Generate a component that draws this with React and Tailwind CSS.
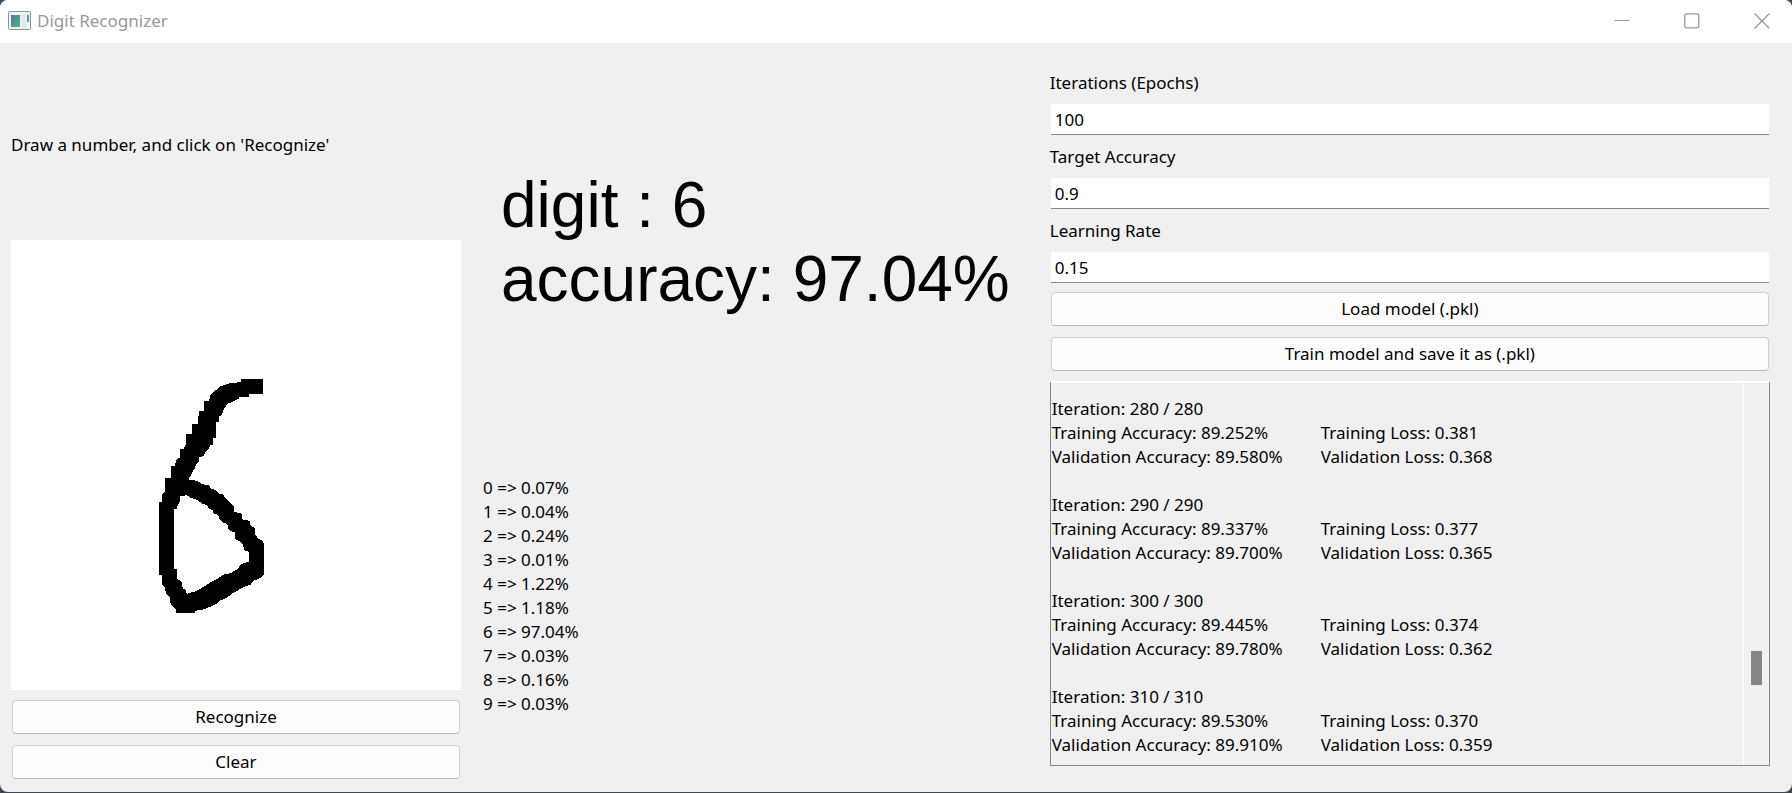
import React from "react";

const probabilities = ["0.07", "0.04", "0.24", "0.01", "1.22", "1.18", "97.04", "0.03", "0.16", "0.03"];

const logEntries = [
  { iteration: 280, trainAcc: "89.252", trainLoss: "0.381", valAcc: "89.580", valLoss: "0.368" },
  { iteration: 290, trainAcc: "89.337", trainLoss: "0.377", valAcc: "89.700", valLoss: "0.365" },
  { iteration: 300, trainAcc: "89.445", trainLoss: "0.374", valAcc: "89.780", valLoss: "0.362" },
  { iteration: 310, trainAcc: "89.530", trainLoss: "0.370", valAcc: "89.910", valLoss: "0.359" },
];

function PushButton({ children }) {
  return (
    <button
      type="button"
      className="mx-px h-[34px] shrink-0 rounded-[4px] border border-[#cfcfcf] border-b-[#b8b8b8] bg-[#fdfdfd] leading-6"
    >
      {children}
    </button>
  );
}

function Field({ id, label, value }) {
  return (
    <div className="flex flex-col gap-[9px]">
      <label htmlFor={id} className="leading-6">
        {label}
      </label>
      <input
        id={id}
        type="text"
        defaultValue={value}
        className="mx-px h-[31px] rounded-none border-b border-[#868686] bg-white px-1 leading-6 outline-none"
      />
    </div>
  );
}

function AppIcon() {
  return (
    <svg width="24" height="20" viewBox="0 0 24 20" aria-hidden="true">
      <defs>
        <linearGradient id="pane" x1="0" y1="0" x2="1" y2="1">
          <stop offset="0" stopColor="#4b7f9c" />
          <stop offset="1" stopColor="#55b088" />
        </linearGradient>
      </defs>
      <rect x="0.5" y="0.5" width="22" height="18" rx="1" fill="#f1f3f5" stroke="#8a929a" />
      <rect x="3" y="4" width="9" height="12" fill="url(#pane)" />
      <rect x="13" y="3" width="5" height="14" fill="#e4e9ec" />
      <rect x="19" y="4" width="2" height="7" fill="#5b9a95" />
    </svg>
  );
}

function TitleBar() {
  return (
    <header className="flex h-[43px] shrink-0 items-center bg-white pb-[2px] pl-2 text-[#999]">
      <AppIcon />
      <h1 className="ml-[5px] flex-1 leading-6">Digit Recognizer</h1>
      <div className="flex h-full gap-[10px]">
        <button type="button" aria-label="Minimize" className="flex w-[60px] items-center justify-center">
          <svg width="16" height="16" viewBox="0 0 16 16" fill="none" stroke="#999">
            <path d="M0.5 7.5H15.5" />
          </svg>
        </button>
        <button type="button" aria-label="Maximize" className="flex w-[60px] items-center justify-center">
          <svg width="16" height="16" viewBox="0 0 16 16" fill="none" stroke="#999" strokeWidth="1.3">
            <rect x="0.8" y="0.8" width="14" height="14" rx="1.5" />
          </svg>
        </button>
        <button type="button" aria-label="Close" className="flex w-[60px] items-center justify-center">
          <svg width="16" height="16" viewBox="0 0 16 16" fill="none" stroke="#999" strokeWidth="1.3">
            <path d="M0.5 0.5L15.5 15.5M15.5 0.5L0.5 15.5" />
          </svg>
        </button>
      </div>
    </header>
  );
}

function DrawingCanvas() {
  return (
    <svg viewBox="0 0 1350 1350" className="mb-[10px] aspect-square w-full shrink-0 bg-white" role="img" aria-label="Drawn digit">
      <g transform="translate(387 360)" shapeRendering="crispEdges">
        <path
          fillRule="evenodd"
          fill="#000"
          d="M368 57V102H327V110H298V116L280 124L262 132L256 142L250 150L246 165L238 168V187H228V235H219V254H210L208 264L196 276L192 288L178 292L176 305L168 312L164 325L156 338L150 350H146V360L172 362L184 372L208 376L210 384L226 390L236 400L250 404L254 412L262 420L270 428L282 440V456L304 460L308 480L330 482L332 498L344 504V520L354 536L366 542L372 552V644L366 650L350 660L340 662L332 674L312 680L296 690L278 700L262 712L240 722L226 734L206 742L186 750L165 752V759H108V748L97 738L90 728V712L78 702L74 680L66 674V645H57V426H66V405L75 395V354H93V318H103L110 298L120 292V268H129L138 254V223H156V192H174V178L178 152H192V122H208L210 108L220 98L228 90L240 80L250 76L268 70L304 66V57ZM120 408L140 406L154 414L172 420L186 430L200 436L208 446L218 450L220 460L234 464L238 478L246 486L262 492L264 506L274 514L286 518V538L300 544L308 554L314 572L328 576V604L304 612L292 628L270 640L250 644L232 656L210 668L188 682L168 694L150 698L140 702L138 690L128 684L126 666L110 656V626H102V448H110L112 438L120 424Z"
        />
      </g>
    </svg>
  );
}

function TrainingLog() {
  return (
    <section
      aria-label="Training log"
      className="mt-[10px] flex flex-1 border border-t-2 border-[#868686] border-t-white"
    >
      <div className="flex flex-1 flex-col gap-6 pt-[14px] pb-2 leading-6">
        {logEntries.map((e) => (
          <div key={e.iteration} className="grid grid-cols-[269px_auto] pl-px">
            <p className="col-span-2">
              Iteration: {e.iteration} / {e.iteration}
            </p>
            <p>Training Accuracy: {e.trainAcc}%</p>
            <p>Training Loss: {e.trainLoss}</p>
            <p>Validation Accuracy: {e.valAcc}%</p>
            <p>Validation Loss: {e.valLoss}</p>
          </div>
        ))}
      </div>
      <div className="flex w-[26px] flex-col items-center border-l border-white">
        <div className="grow-[10]" />
        <div className="h-[34px] w-[11px] bg-[#868686]" />
        <div className="grow-[3]" />
      </div>
    </section>
  );
}

export default function App() {
  return (
    <div className="flex min-h-screen flex-col bg-[#3a4856] pb-px font-['Noto_Sans',sans-serif] text-[17px] text-black">
      <div className="flex flex-1 flex-col overflow-hidden rounded-lg bg-[#f0f0f0]">
        <TitleBar />
        <main className="grid flex-1 grid-cols-[450px_auto_minmax(0,1fr)] gap-x-[22px] pr-[22px] pl-[11px]">
          <section className="flex flex-col pt-[11px] pb-[13px]">
            <p className="flex flex-1 items-center pb-1 leading-6">Draw a number, and click on &#39;Recognize&#39;</p>
            <DrawingCanvas />
            <div className="flex flex-col gap-[11px]">
              <PushButton>Recognize</PushButton>
              <PushButton>Clear</PushButton>
            </div>
          </section>

          <section className="flex flex-col justify-between pt-[125px] pb-[76px]">
            <p className="px-[18px] font-['Liberation_Sans',sans-serif] text-[64px] leading-[74px] whitespace-nowrap">
              digit : 6
              <br />
              accuracy: 97.04%
            </p>
            <ul className="leading-6">
              {probabilities.map((p, digit) => (
                <li key={digit}>
                  {digit} =&gt; {p}%
                </li>
              ))}
            </ul>
          </section>

          <section className="flex flex-col pt-7 pb-[26px]">
            <div className="flex flex-col gap-[10px]">
              <Field id="epochs" label="Iterations (Epochs)" value="100" />
              <Field id="accuracy" label="Target Accuracy" value="0.9" />
              <Field id="rate" label="Learning Rate" value="0.15" />
            </div>
            <div className="mt-[9px] flex flex-col gap-[11px]">
              <PushButton>Load model (.pkl)</PushButton>
              <PushButton>Train model and save it as (.pkl)</PushButton>
            </div>
            <TrainingLog />
          </section>
        </main>
      </div>
    </div>
  );
}
